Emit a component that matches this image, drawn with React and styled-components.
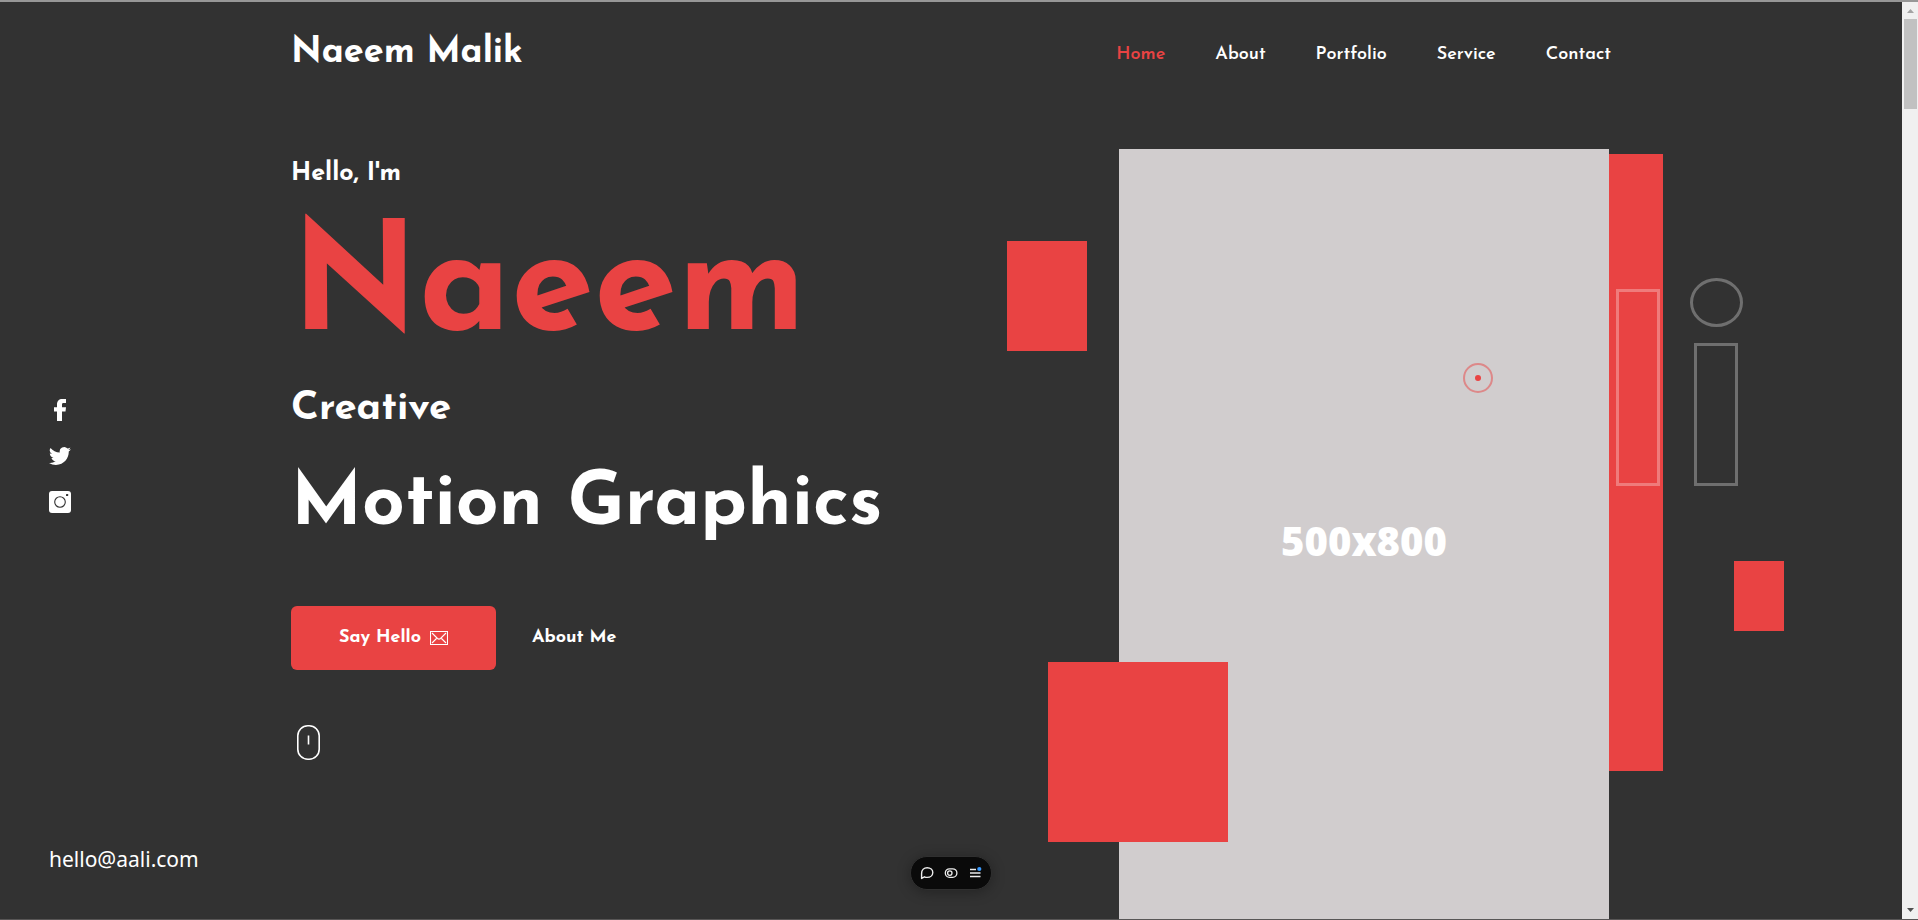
import React from "react";
import styled, { createGlobalStyle } from "styled-components";

const RED = "#e94343";
const DARK = "#323232";

const GlobalStyle = createGlobalStyle`
  *, *::before, *::after { box-sizing: border-box; }
  html, body, #root { height: 100%; }
  body { margin: 0; background: ${DARK}; color: #fff; font-family: "Josefin Sans", Lato, sans-serif; overflow: hidden; }
  h1, h2, p, ul { margin: 0; padding: 0; }
  a { color: inherit; text-decoration: none; }
`;

const Shell = styled.div`
  display: flex;
  height: 100vh;
  border-top: 2px solid #979797;
  border-bottom: 1px solid #585656;
`;

const Page = styled.div`
  position: relative;
  flex: 1;
  min-width: 0;
  display: grid;
  grid-template-columns: 1fr minmax(0, 1320px) 1fr;
  grid-template-rows: minmax(0, 1fr);
  overflow: hidden;
`;

const Rail = styled.aside`
  display: grid;
  grid-template-rows: 1fr auto 1fr;
  padding: 36px 0 45px 49px;
`;

const Socials = styled.ul`
  grid-row: 2;
  display: flex;
  flex-direction: column;
  gap: 24px;
  list-style: none;
`;

const SocialLink = styled.a`
  display: block;
  width: 22px;
  height: 22px;
  svg { display: block; }
`;

const Email = styled.a`
  grid-row: 3;
  align-self: end;
  font: 400 21px/30px "Noto Sans", sans-serif;
  white-space: nowrap;
`;

const Content = styled.div`
  min-width: 0;
`;

const Header = styled.header`
  display: flex;
  justify-content: space-between;
  align-items: center;
  padding-top: 27px;
`;

const Logo = styled.a`
  font-size: 36px;
  line-height: 48px;
  font-weight: 700;
`;

const Nav = styled.nav`
  display: flex;
  gap: 50px;
  padding-top: 3px;
`;

const NavLink = styled.a`
  font-size: 18px;
  line-height: 22px;
  font-weight: 600;
  color: ${(p) => (p.$active ? RED : "#fff")};
`;

const Hero = styled.main`
  display: flex;
  justify-content: space-between;
  align-items: flex-start;
  padding-top: 72px;
`;

const Copy = styled.section`
  padding-top: 9px;
`;

const Greeting = styled.p`
  font-size: 25px;
  line-height: 32px;
  font-weight: 700;
`;

const Name = styled.h1`
  margin-top: 22px;
  font-size: 150px;
  line-height: 160px;
  font-weight: 700;
  color: ${RED};
`;

const Prefix = styled.p`
  margin-top: 13px;
  font-size: 40px;
  line-height: 48px;
  font-weight: 700;
`;

const Role = styled.h2`
  margin-top: 25px;
  font-size: 75px;
  line-height: 96px;
  font-weight: 700;
  white-space: nowrap;
`;

const Actions = styled.div`
  display: flex;
  align-items: center;
  gap: 36px;
  margin-top: 52px;
`;

const HelloButton = styled.button`
  display: flex;
  align-items: center;
  justify-content: center;
  gap: 9px;
  min-width: 205px;
  height: 64px;
  border: 0;
  border-radius: 6px;
  background: ${RED};
  color: #fff;
  font: inherit;
  font-size: 18px;
  font-weight: 700;
  cursor: pointer;
`;

const TextLink = styled.a`
  font-size: 18px;
  line-height: 22px;
  font-weight: 700;
`;

const ScrollHint = styled.a`
  display: block;
  width: 23px;
  margin: 55px 0 0 6px;
  svg { display: block; }
`;

const Visual = styled.div`
  position: relative;
  flex: none;
  width: 490px;
  height: 784px;
  margin-right: 2px;
`;

const Placeholder = styled.div`
  position: relative;
  display: grid;
  place-items: center;
  height: 100%;
  background: #d1cdce;
  font: 800 40px/48px "Open Sans", sans-serif;
`;

const Shape = styled.span`
  position: absolute;
  left: ${(p) => p.$x}px;
  top: ${(p) => p.$y}px;
  width: ${(p) => p.$w}px;
  height: ${(p) => p.$h}px;
`;

const Block = styled(Shape)`
  background: ${RED};
`;

const Outline = styled(Shape)`
  border: 3px solid rgba(255, 255, 255, 0.3);
  border-radius: ${(p) => (p.$round ? "50%" : "0")};
`;

const Cursor = styled.span`
  position: absolute;
  left: 344px;
  top: 214px;
  display: grid;
  place-items: center;
  width: 30px;
  height: 30px;
  border: 2px solid rgba(233, 67, 67, 0.5);
  border-radius: 50%;
  &::after {
    content: "";
    width: 6px;
    height: 6px;
    border-radius: 50%;
    background: ${RED};
  }
`;

const Toolbar = styled.div`
  position: absolute;
  left: 50%;
  bottom: 29px;
  transform: translateX(-50%);
  display: flex;
  align-items: center;
  justify-content: center;
  gap: 8px;
  width: 82px;
  height: 34px;
  border: 1px solid #303030;
  border-radius: 17px;
  background: #0a0a0a;
  box-shadow: 0 2px 14px rgba(0, 0, 0, 0.3);
`;

const ToolButton = styled.button`
  padding: 0;
  border: 0;
  background: none;
  width: 16px;
  height: 16px;
  cursor: pointer;
  svg { display: block; }
`;

const Scrollbar = styled.div`
  flex: none;
  display: flex;
  flex-direction: column;
  align-items: center;
  width: 16px;
  background: #f0f0f0;
`;

const Arrow = styled.svg`
  flex: none;
  display: block;
`;

const Thumb = styled.div`
  width: 13px;
  height: 90px;
  margin-bottom: auto;
  background: #c1c1c1;
`;

const links = ["Home", "About", "Portfolio", "Service", "Contact"];

function FacebookIcon() {
  return (
    <svg width="22" height="22" viewBox="0 0 22 22" fill="#fff">
      <path d="M8 22V12.4H5V8.2h3V5.6C8 2 10 0 13.2 0H17v4h-2.400C13.300 4 13 4.700 13 5.700v2.500h4l-.5 4.200H13V22z" />
    </svg>
  );
}

function TwitterIcon() {
  return (
    <svg width="22" height="22" viewBox="0 0 24 24" fill="#fff">
      <path d="M23.95 4.57a10 10 0 0 1-2.82.77 4.96 4.96 0 0 0 2.160-2.720c-.95.55-2 .95-3.130 1.180a4.920 4.920 0 0 0-8.380 4.480C7.690 8.090 4.070 6.130 1.640 3.160a4.920 4.920 0 0 0 1.520 6.570 4.900 4.900 0 0 1-2.230-.61v.06c0 2.380 1.690 4.370 3.950 4.830a5 5 0 0 1-2.210.08 4.940 4.940 0 0 0 4.600 3.420A9.870 9.870 0 0 1 0 19.540a14 14 0 0 0 7.550 2.210c9.050 0 14-7.500 14-13.980 0-.21 0-.42-.02-.63a9.940 9.940 0 0 0 2.420-2.570z" />
    </svg>
  );
}

function InstagramIcon() {
  return (
    <svg width="22" height="22" viewBox="0 0 22 22">
      <rect width="22" height="22" rx="3" fill="#fff" />
      <circle cx="11" cy="11" r="5.300" fill="none" stroke={DARK} strokeWidth="1.100" />
      <rect x="17" y="3" width="2.200" height="2" rx=".5" fill={DARK} />
    </svg>
  );
}

function EnvelopeIcon() {
  return (
    <svg width="18" height="14" viewBox="0 0 18 14" fill="none" stroke="#fff" strokeWidth="1.100">
      <path d="M.5.5h17v13H.5zM2 2l5.500 5.500q1.500 1.200 3 0L16 2M2 12l4.500-4.500M16 12l-4.500-4.500" />
    </svg>
  );
}

export default function App() {
  return (
    <>
      <GlobalStyle />
      <Shell>
        <Page>
          <Rail>
            <Socials>
              <li><SocialLink href="#facebook" aria-label="Facebook"><FacebookIcon /></SocialLink></li>
              <li><SocialLink href="#twitter" aria-label="Twitter"><TwitterIcon /></SocialLink></li>
              <li><SocialLink href="#instagram" aria-label="Instagram"><InstagramIcon /></SocialLink></li>
            </Socials>
            <Email href="mailto:hello@aali.com">hello@aali.com</Email>
          </Rail>

          <Content>
            <Header>
              <Logo href="#home">Naeem Malik</Logo>
              <Nav>
                {links.map((label, i) => (
                  <NavLink key={label} href={`#${label.toLowerCase()}`} $active={i === 0}>{label}</NavLink>
                ))}
              </Nav>
            </Header>
            <Hero>
              <Copy>
                <Greeting>Hello, I'm</Greeting>
                <Name>Naeem</Name>
                <Prefix>Creative</Prefix>
                <Role>Motion Graphics</Role>
                <Actions>
                  <HelloButton type="button">Say Hello <EnvelopeIcon /></HelloButton>
                  <TextLink href="#about">About Me</TextLink>
                </Actions>
                <ScrollHint href="#about" aria-label="Scroll down">
                  <svg width="23" height="35" viewBox="0 0 23 35" fill="none" stroke="#fff" strokeWidth="1.600">
                    <rect x=".8" y=".8" width="21.400" height="33.400" rx="10" />
                    <path d="M11.500 10.500v9" />
                  </svg>
                </ScrollHint>
              </Copy>
              <Visual>
                <Block $x={400} $y={5} $w={144} $h={617} />
                <Placeholder>500x800</Placeholder>
                <Block $x={-112} $y={92} $w={80} $h={110} />
                <Block $x={-71} $y={513} $w={180} $h={180} />
                <Block $x={615} $y={412} $w={50} $h={70} />
                <Outline $x={497} $y={140} $w={44} $h={197} />
                <Outline $x={575} $y={194} $w={44} $h={143} />
                <Outline $x={571} $y={129} $w={53} $h={49} $round />
                <Cursor />
              </Visual>
            </Hero>
          </Content>

          <Toolbar>
            <ToolButton type="button" aria-label="Comment">
              <svg width="16" height="16" viewBox="0 0 16 16" fill="none" stroke="#ededed" strokeWidth="1.400">
                <path d="M2.600 13.400v-5C2.600 5 5 2.700 8.200 2.700c3.200 0 5.600 2 5.600 4.800s-2.400 4.900-5.600 4.900c-1 0-2-.2-2.700-.6z" strokeLinejoin="round" />
              </svg>
            </ToolButton>
            <ToolButton type="button" aria-label="Preview mode">
              <svg width="16" height="16" viewBox="0 0 16 16" fill="none" stroke="#ededed" strokeWidth="1.300">
                <rect x="2.300" y="3.800" width="11.600" height="8.600" rx="4.300" />
                <circle cx="6.800" cy="8.100" r="2.200" />
              </svg>
            </ToolButton>
            <ToolButton type="button" aria-label="Menu">
              <svg width="16" height="16" viewBox="0 0 16 16">
                <path d="M3 4.500h6M3 8h10.500M3 11.500h10.500" stroke="#ededed" strokeWidth="1.400" />
                <circle cx="12.300" cy="4" r="2.100" fill="#3b9bff" />
              </svg>
            </ToolButton>
          </Toolbar>
        </Page>
        <Scrollbar aria-hidden="true">
          <Arrow width="16" height="17" viewBox="0 0 16 17"><path d="M5 11h7L8.500 7z" fill="#a3a3a3" /></Arrow>
          <Thumb />
          <Arrow width="16" height="17" viewBox="0 0 16 17"><path d="M5 6h7L8.500 10z" fill="#505050" /></Arrow>
        </Scrollbar>
      </Shell>
    </>
  );
}
